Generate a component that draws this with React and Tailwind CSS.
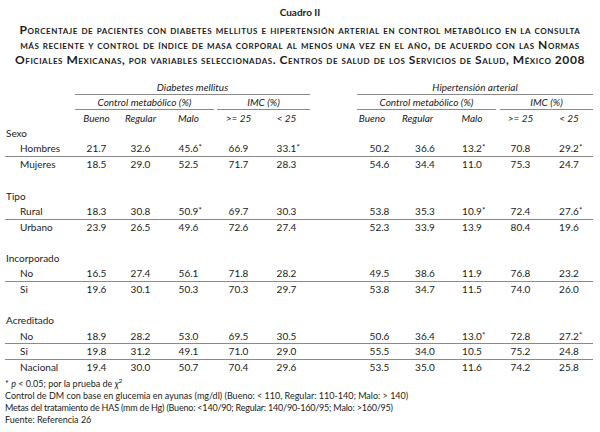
import React from "react";

const rows = [
  { label: "Sexo", group: true },
  { label: "Hombres", dm: ["21.7", "32.6", "45.6*", "66.9", "33.1*"], ha: ["50.2", "36.6", "13.2*", "70.8", "29.2*"], line: true },
  { label: "Mujeres", dm: ["18.5", "29.0", "52.5", "71.7", "28.3"], ha: ["54.6", "34.4", "11.0", "75.3", "24.7"] },
  { blank: true },
  { label: "Tipo", group: true },
  { label: "Rural", dm: ["18.3", "30.8", "50.9*", "69.7", "30.3"], ha: ["53.8", "35.3", "10.9*", "72.4", "27.6*"], line: true },
  { label: "Urbano", dm: ["23.9", "26.5", "49.6", "72.6", "27.4"], ha: ["52.3", "33.9", "13.9", "80.4", "19.6"] },
  { blank: true },
  { label: "Incorporado", group: true },
  { label: "No", dm: ["16.5", "27.4", "56.1", "71.8", "28.2"], ha: ["49.5", "38.6", "11.9", "76.8", "23.2"], line: true },
  { label: "Si", dm: ["19.6", "30.1", "50.3", "70.3", "29.7"], ha: ["53.8", "34.7", "11.5", "74.0", "26.0"] },
  { blank: true },
  { label: "Acreditado", group: true },
  { label: "No", dm: ["18.9", "28.2", "53.0", "69.5", "30.5"], ha: ["50.6", "36.4", "13.0*", "72.8", "27.2*"], line: true },
  { label: "Si", dm: ["19.8", "31.2", "49.1", "71.0", "29.0"], ha: ["55.5", "34.0", "10.5", "75.2", "24.8"], line: true },
  { label: "Nacional", dm: ["19.4", "30.0", "50.7", "70.4", "29.6"], ha: ["53.5", "35.0", "11.6", "74.2", "25.8"] },
];

// column widths: DM c1..c5, HA c1..c5
const dmW = ["w-[43px]", "w-[45px]", "w-[51px]", "w-[49px]", "w-[47px]"];
const haW = ["w-[45px]", "w-[46px]", "w-[48px]", "w-[49px]", "w-[48px]"];

const Num = ({ v }) => {
  const star = v.endsWith("*");
  return (
    <span>
      {star ? v.slice(0, -1) : v}
      {star && <span className="inline-block w-0 text-[8px] align-[2px]">*</span>}
    </span>
  );
};

const Row = ({ r }) => {
  if (r.blank) return <div className="h-[15.6px]" />;
  return (
    <div className={`flex h-[15.6px] items-center ${r.line ? "border-b border-[#8a8a8a]" : ""}`}>
      <div className={`w-[70px] ${r.group ? "pl-[1px]" : "pl-[15px]"}`}>{r.label}</div>
      {r.dm &&
        r.dm.map((v, i) => (
          <div key={"d" + i} className={`${dmW[i]} text-center`}>
            <Num v={v} />
          </div>
        ))}
      {r.dm && <div className="w-[47px]" />}
      {r.ha &&
        r.ha.map((v, i) => (
          <div key={"h" + i} className={`${haW[i]} text-center`}>
            <Num v={v} />
          </div>
        ))}
    </div>
  );
};

export default function App() {
  return (
    <div className="w-[600px] h-[432px] bg-white text-[#1b1b1b] font-['Lato',sans-serif] text-[10px] overflow-hidden">
      <div className="pt-[5px] text-center font-bold text-[10px] leading-[15px]">Cuadro II</div>
      <div className="text-center font-bold text-[12px] tracking-[0.55px] leading-[15px] [font-variant:small-caps] pt-[2px]">
        Porcentaje de pacientes con diabetes mellitus e hipertensión arterial en control metabólico en la consulta
        <br />
        más reciente y control de índice de masa corporal al menos una vez en el año, de acuerdo con las Normas
        <br />
        Oficiales Mexicanas, por variables seleccionadas. Centros de salud de los Servicios de Salud, México 2008
      </div>

      <div className="ml-[5px] w-[588px] mt-[13px]">
        <div className="flex h-[15px] items-center italic">
          <div className="w-[70px]" />
          <div className="w-[235px] h-full flex items-center justify-center border-b border-[#8a8a8a]">Diabetes mellitus</div>
          <div className="w-[47px]" />
          <div className="w-[236px] h-full flex items-center justify-center border-b border-[#8a8a8a]">Hipertensión arterial</div>
        </div>
        <div className="flex h-[15px] italic">
          <div className="w-[70px]" />
          <div className="w-[139px] flex items-center justify-center border-b border-[#8a8a8a]">Control metabólico (%)</div>
          <div className="w-[93px] ml-[3px] flex items-center justify-center border-b border-[#8a8a8a]">IMC (%)</div>
          <div className="w-[47px]" />
          <div className="w-[139px] flex items-center justify-center border-b border-[#8a8a8a]">Control metabólico (%)</div>
          <div className="w-[93px] ml-[4px] flex items-center justify-center border-b border-[#8a8a8a]">IMC (%)</div>
        </div>
        <div className="flex h-[16px] items-center italic">
          <div className="w-[70px]" />
          <div className="w-[43px] text-center">Bueno</div>
          <div className="w-[45px] text-center">Regular</div>
          <div className="w-[51px] text-center">Malo</div>
          <div className="w-[49px] text-center">&gt;= 25</div>
          <div className="w-[47px] text-center">&lt; 25</div>
          <div className="w-[47px]" />
          <div className="w-[45px] text-center pr-[15px]">Bueno</div>
          <div className="w-[46px] text-center pr-[30px]">Regular</div>
          <div className="w-[48px] text-center">Malo</div>
          <div className="w-[49px] text-center">&gt;= 25</div>
          <div className="w-[48px] text-center">&lt; 25</div>
        </div>
        {rows.map((r, i) => (
          <Row key={i} r={r} />
        ))}
      </div>

      <div className="ml-[5px] mt-[2px] text-[9px] leading-[12.3px]">
        <div>
          * <i>p</i> &lt; 0.05; por la prueba de <i>χ</i>
          <sup className="text-[6.5px]">2</sup>
        </div>
        <div>Control de DM con base en glucemia en ayunas (mg/dl) (Bueno: &lt; 110, Regular: 110-140; Malo: &gt; 140)</div>
        <div className="tracking-[-0.2px]">Metas del tratamiento de HAS (mm de Hg) (Bueno: &lt;140/90; Regular: 140/90-160/95; Malo: &gt;160/95)</div>
        <div>Fuente: Referencia 26</div>
      </div>
    </div>
  );
}
